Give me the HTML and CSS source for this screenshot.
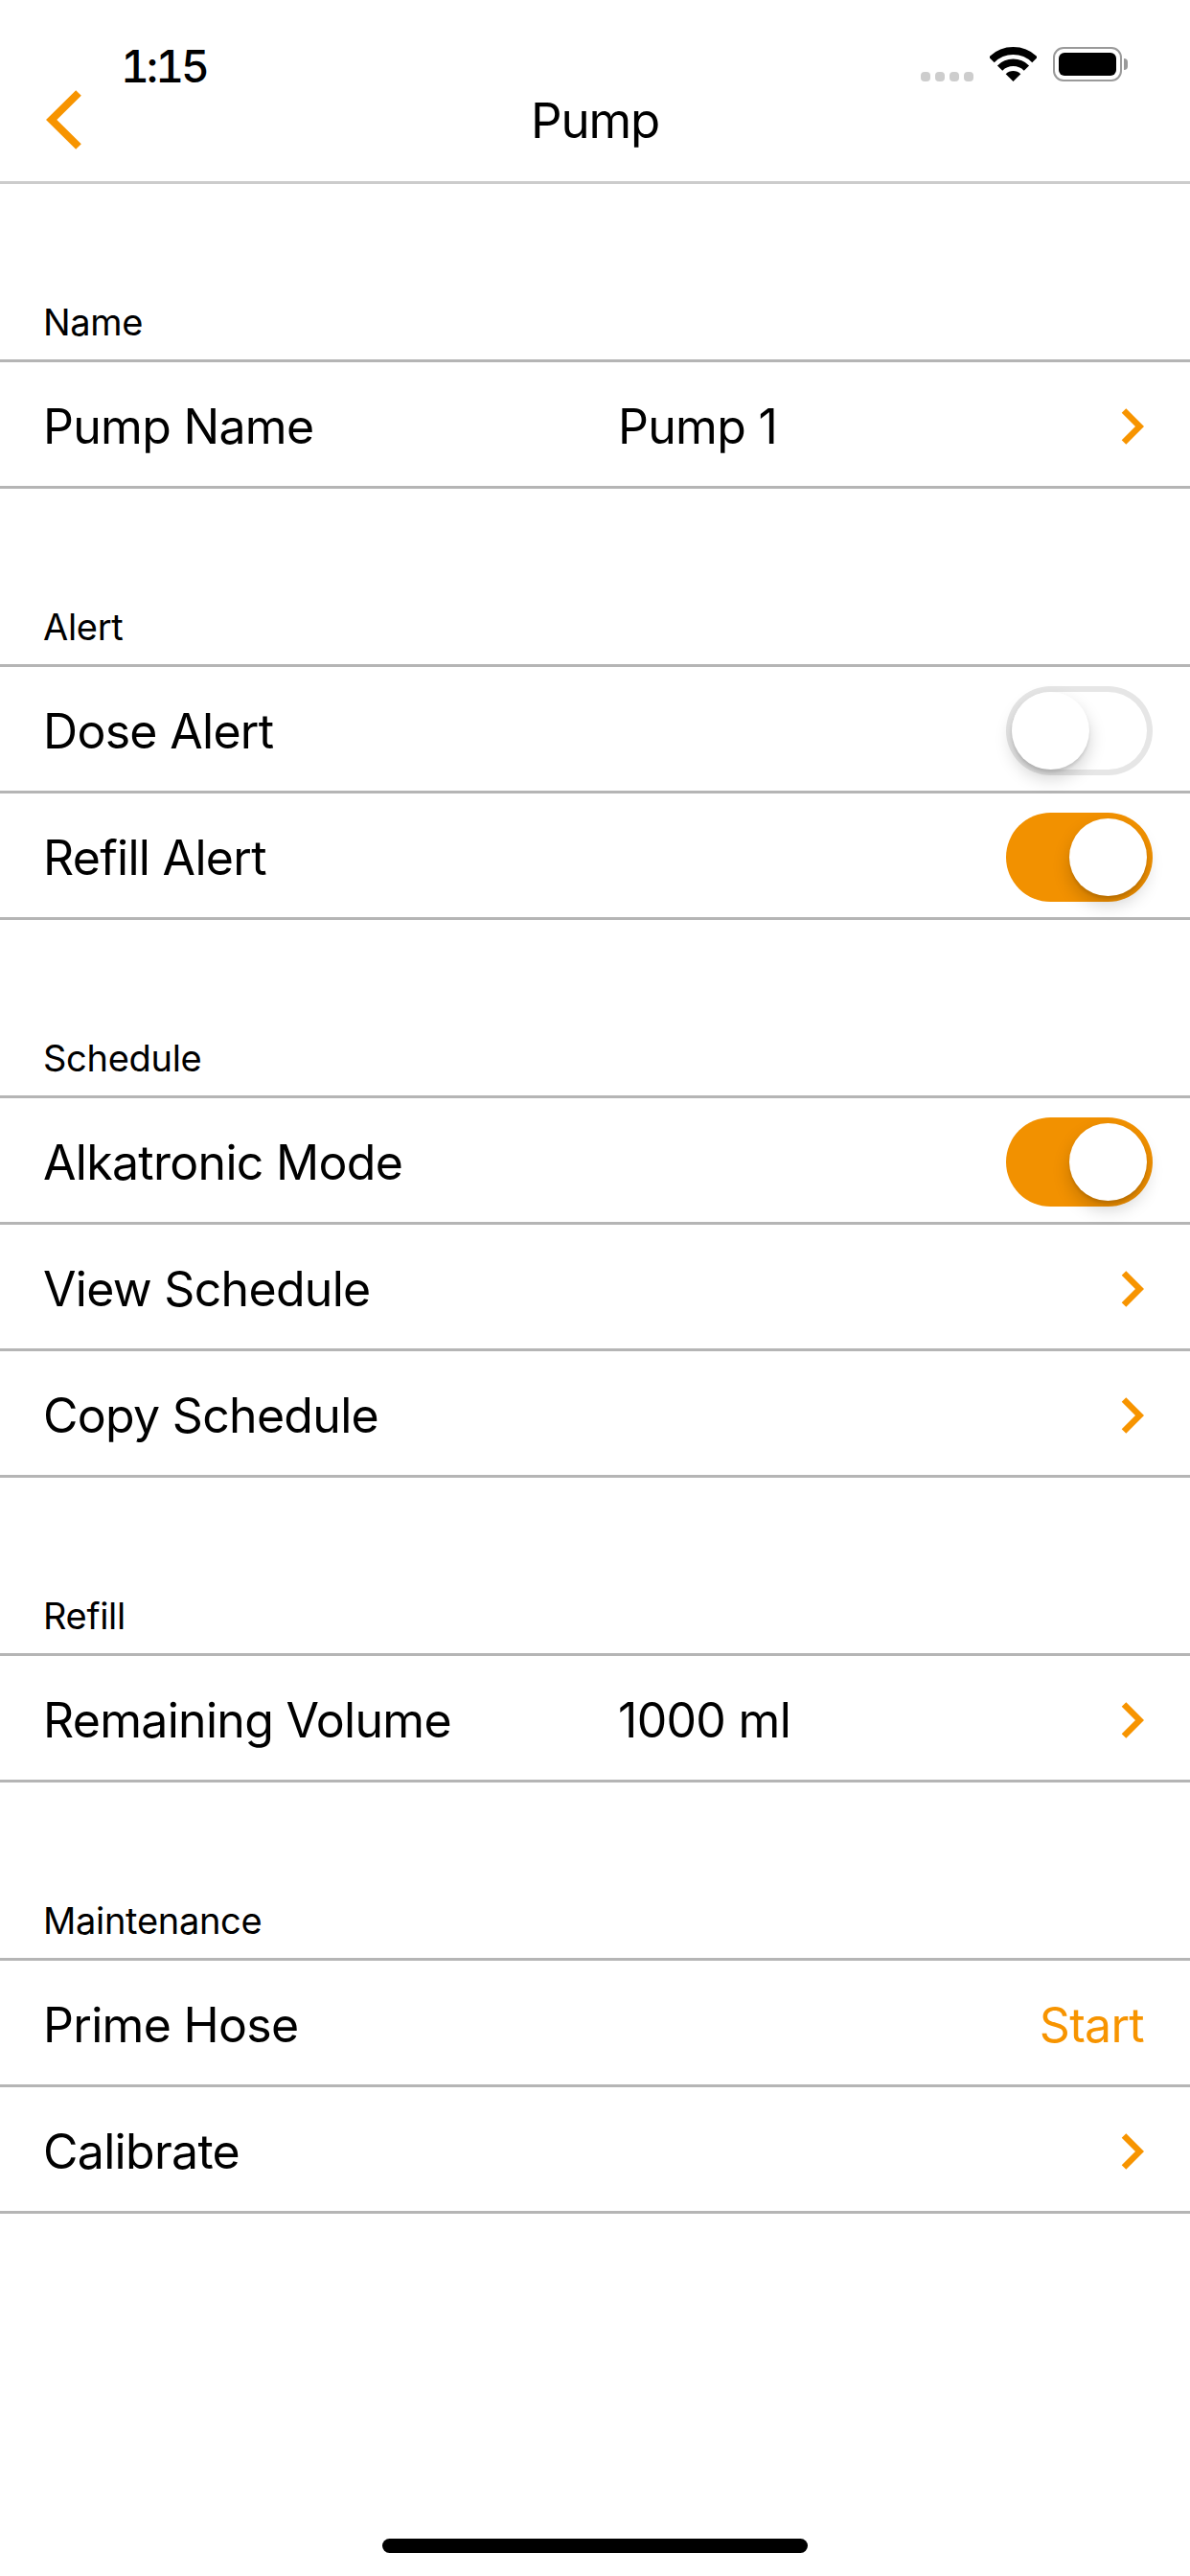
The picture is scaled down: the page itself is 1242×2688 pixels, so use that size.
FILE: index.html
```html
<!DOCTYPE html>
<html lang="en">
<head>
	<meta charset="UTF-8">
	<title>Pump</title>
	<link rel="stylesheet" href="styles.css">
</head>
<body>
<main class="screen">
	<div class="status">
		<span class="time">1:15</span>
		<div class="status-icons">
			<div class="signal"><i></i><i></i><i></i><i></i></div>
			<svg class="wifi" width="49" height="36" viewBox="0 0 49 36">
				<path d="M1.9 13.4A32 32 0 0 1 47.1 13.4" fill="none" stroke="#000" stroke-width="8"/>
				<path d="M10.6 22.1A19.7 19.7 0 0 1 38.4 22.1" fill="none" stroke="#000" stroke-width="7.5"/>
				<path d="M24.5 36L16.7 28.2A11 11 0 0 1 32.3 28.2Z" fill="#000"/>
			</svg>
			<div class="battery"><div class="battery-fill"></div></div>
			<div class="battery-tip"></div>
		</div>
	</div>

	<nav class="nav">
		<svg class="back" width="37" height="62" viewBox="0 0 37 62">
			<path d="M34 3L5.7 31L34 59" fill="none" stroke="#f79400" stroke-width="8"/>
		</svg>
		<h1 class="title">Pump</h1>
	</nav>

	<section>
		<h2 class="head">Name</h2>
		<div class="row">
			<span class="label">Pump Name</span>
			<span class="value">Pump 1</span>
			<svg class="chev" width="24" height="40" viewBox="0 0 24 40"><path d="M3 3.5L19.5 20L3 36.5" fill="none" stroke="#f79400" stroke-width="6.5"/></svg>
		</div>
	</section>

	<section>
		<h2 class="head">Alert</h2>
		<div class="row">
			<span class="label">Dose Alert</span>
			<div class="toggle"><div class="knob"></div></div>
		</div>
		<div class="row">
			<span class="label">Refill Alert</span>
			<div class="toggle on"><div class="knob"></div></div>
		</div>
	</section>

	<section>
		<h2 class="head">Schedule</h2>
		<div class="row">
			<span class="label">Alkatronic Mode</span>
			<div class="toggle on"><div class="knob"></div></div>
		</div>
		<div class="row">
			<span class="label">View Schedule</span>
			<svg class="chev" width="24" height="40" viewBox="0 0 24 40"><path d="M3 3.5L19.5 20L3 36.5" fill="none" stroke="#f79400" stroke-width="6.5"/></svg>
		</div>
		<div class="row">
			<span class="label">Copy Schedule</span>
			<svg class="chev" width="24" height="40" viewBox="0 0 24 40"><path d="M3 3.5L19.5 20L3 36.5" fill="none" stroke="#f79400" stroke-width="6.5"/></svg>
		</div>
	</section>

	<section>
		<h2 class="head">Refill</h2>
		<div class="row">
			<span class="label">Remaining Volume</span>
			<span class="value">1000 ml</span>
			<svg class="chev" width="24" height="40" viewBox="0 0 24 40"><path d="M3 3.5L19.5 20L3 36.5" fill="none" stroke="#f79400" stroke-width="6.5"/></svg>
		</div>
	</section>

	<section>
		<h2 class="head">Maintenance</h2>
		<div class="row">
			<span class="label">Prime Hose</span>
			<span class="start">Start</span>
		</div>
		<div class="row">
			<span class="label">Calibrate</span>
			<svg class="chev" width="24" height="40" viewBox="0 0 24 40"><path d="M3 3.5L19.5 20L3 36.5" fill="none" stroke="#f79400" stroke-width="6.5"/></svg>
		</div>
	</section>

	<div class="home-bar"></div>
</main>
</body>
</html>
```

FILE: styles.css
```css
* {
	box-sizing: border-box;
}

body {
	margin: 0;
	background: #fff;
	color: #000;
	font-family: Inter, "Liberation Sans", sans-serif;
}

.screen {
	display: flex;
	flex-direction: column;
	height: 2688px;
}

/* status bar */
.status {
	display: flex;
	justify-content: space-between;
	height: 94px;
	padding: 44px 65px 0 126px;
}

.time {
	font-size: 46px;
	font-weight: 500;
	line-height: 50px;
	letter-spacing: -3px;
	font-feature-settings: "tnum";
}

.status-icons {
	display: flex;
	align-items: flex-start;
	padding-top: 5px;
}

.signal {
	display: flex;
	gap: 5px;
	margin: 26px 17px 0 0;
}

.signal i {
	width: 10px;
	height: 10px;
	border-radius: 4px;
	background: #cdcdcd;
}

.wifi {
	margin-right: 17px;
}

.battery {
	width: 72px;
	height: 36px;
	padding: 4px;
	border: 2px solid #9a9a9a;
	border-radius: 11px;
}

.battery-fill {
	height: 100%;
	border-radius: 6px;
	background: #000;
}

.battery-tip {
	width: 4px;
	height: 12px;
	margin: 12px 0 0 2px;
	border-radius: 0 6px 6px 0;
	background: #9a9a9a;
}

/* nav bar */
.nav {
	display: grid;
	grid-template-columns: 1fr auto 1fr;
	align-items: center;
	height: 98px;
	padding-bottom: 36px;
	border-bottom: 3px solid #cccccc;
}

.back {
	margin-left: 48px;
}

.title {
	grid-column: 2;
	margin: 0;
	font-size: 51px;
	font-weight: 400;
	letter-spacing: -1.2px;
}

/* table */
.head {
	display: flex;
	align-items: flex-end;
	height: 186px;
	margin: 0;
	padding: 0 45px 16px;
	border-bottom: 3px solid #b5b5b5;
	font-size: 38px;
	font-weight: 400;
	line-height: 46px;
	letter-spacing: -0.3px;
}

.row {
	display: flex;
	align-items: center;
	height: 132px;
	padding: 4px 48px 0 45px;
	border-bottom: 3px solid #b5b5b5;
	font-size: 50px;
	letter-spacing: -0.7px;
}

.label {
	flex: 0 0 600px;
}

.value {
	flex: 1;
}

.chev {
	margin-left: auto;
}

.start {
	margin-left: auto;
	color: #f79400;
}

/* switches */
.toggle {
	display: flex;
	width: 153px;
	height: 93px;
	margin: 0 -9px 0 auto;
	padding: 6px;
	border-radius: 47px;
	background: #fff;
	box-shadow: inset 0 0 0 6px #e6e6e6;
}

.toggle.on {
	justify-content: flex-end;
	background: #f29100;
	box-shadow: none;
}

.knob {
	width: 81px;
	height: 81px;
	border-radius: 50%;
	background: #fff;
	box-shadow: 0 9px 18px rgba(0, 0, 0, 0.18), 0 3px 3px rgba(0, 0, 0, 0.1);
}

.home-bar {
	width: 444px;
	height: 15px;
	margin: auto auto 24px;
	border-radius: 8px;
	background: #000;
}
```
